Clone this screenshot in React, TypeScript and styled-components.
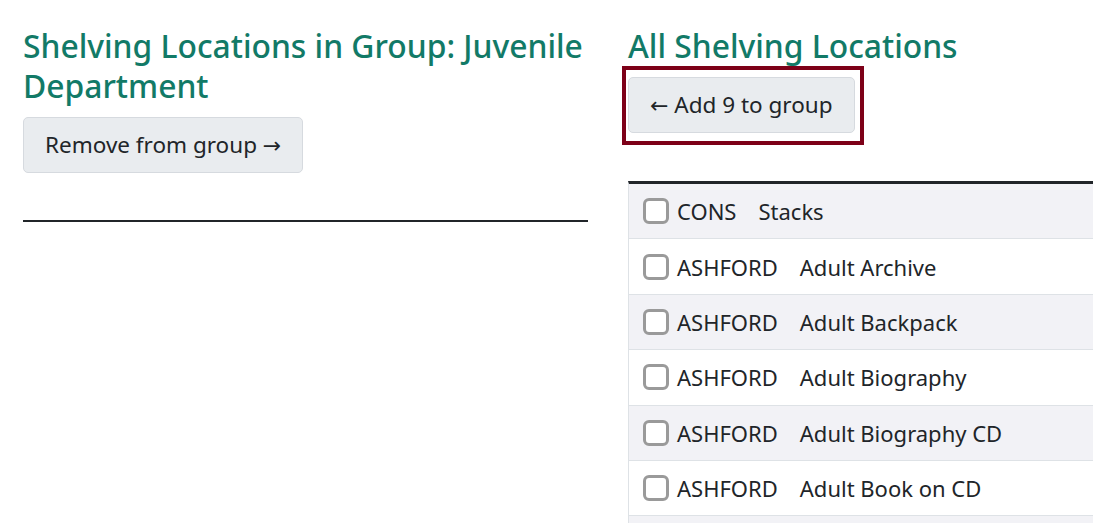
import { createGlobalStyle, styled } from "styled-components";

const GlobalStyle = createGlobalStyle`
    html, body {
        margin: 0;
        padding: 0;
        background: #fff;
    }
    body {
        font-family: "Noto Sans", "Open Sans", sans-serif;
        color: #212529;
    }
`;

const Page = styled.div`
    display: grid;
    grid-template-columns: 565px 1fr;
    column-gap: 40px;
    padding: 26px 0 0 23px;
    overflow: hidden;
    height: 523px;
    box-sizing: border-box;
`;

const Column = styled.div`
    display: flex;
    flex-direction: column;
    align-items: flex-start;
    min-width: 0;
`;

const Heading = styled.h2`
    margin: 0 0 11px;
    font-size: 31.8px;
    line-height: 40px;
    font-weight: 500;
    color: #127a67;
`;

const Button = styled.button`
    font-family: inherit;
    font-size: 22.5px;
    line-height: 30px;
    height: 56px;
    color: #212529;
    background: #e9ecef;
    border: 1px solid #d6dadf;
    border-radius: 5px;
    padding: 0 21px;
    cursor: pointer;
    white-space: nowrap;
`;

const Arrow = styled.span`
    font-family: "DejaVu Sans", sans-serif;
    font-size: 22px;
    line-height: 1;
`;

const Highlight = styled.div<{ $color: string }>`
    border: 4px solid ${(p) => p.$color};
    padding: 7px 5px 8px 2px;
    margin: -11px 0 0 -6px;
`;

const Rule = styled.hr`
    align-self: stretch;
    margin: 47px 0 0;
    border: 0;
    border-top: 2px solid #212529;
`;

const Table = styled.div`
    align-self: stretch;
    margin-top: 36px;
    border-top: 3px solid #212529;
    border-left: 1px solid #dee2e6;
`;

const Row = styled.label<{ $striped: boolean }>`
    display: flex;
    align-items: center;
    height: 55.4px;
    padding-left: 14px;
    background: ${(p) => (p.$striped ? "#f2f2f6" : "#fff")};
    border-bottom: 1px solid #dee2e6;
    font-size: 22px;
    box-sizing: border-box;
`;

const Check = styled.span`
    width: 26px;
    height: 26px;
    box-sizing: border-box;
    border: 3px solid #9a9a9a;
    border-radius: 6px;
    background: #fff;
    margin-right: 8px;
    flex-shrink: 0;
`;

const Code = styled.span`
    margin-right: 22px;
`;

const locations = [
    { code: "CONS", name: "Stacks" },
    { code: "ASHFORD", name: "Adult Archive" },
    { code: "ASHFORD", name: "Adult Backpack" },
    { code: "ASHFORD", name: "Adult Biography" },
    { code: "ASHFORD", name: "Adult Biography CD" },
    { code: "ASHFORD", name: "Adult Book on CD" },
    { code: "ASHFORD", name: "Adult Board Games" }
];

const App = () => {
    return (
        <>
            <GlobalStyle />
            <Page>
                <Column>
                    <Heading>Shelving Locations in Group: Juvenile Department</Heading>
                    <Button>
                        Remove from group <Arrow>→</Arrow>
                    </Button>
                    <Rule />
                </Column>
                <Column>
                    <Heading>All Shelving Locations</Heading>
                    <Highlight $color="#7d0018">
                        <Button>
                            <Arrow>←</Arrow> Add 9 to group
                        </Button>
                    </Highlight>
                    <Table>
                        {locations.map((loc, i) => (
                            <Row key={i} $striped={i % 2 === 0}>
                                <Check />
                                <Code>{loc.code}</Code>
                                {loc.name}
                            </Row>
                        ))}
                    </Table>
                </Column>
            </Page>
        </>
    );
};

export default App;
